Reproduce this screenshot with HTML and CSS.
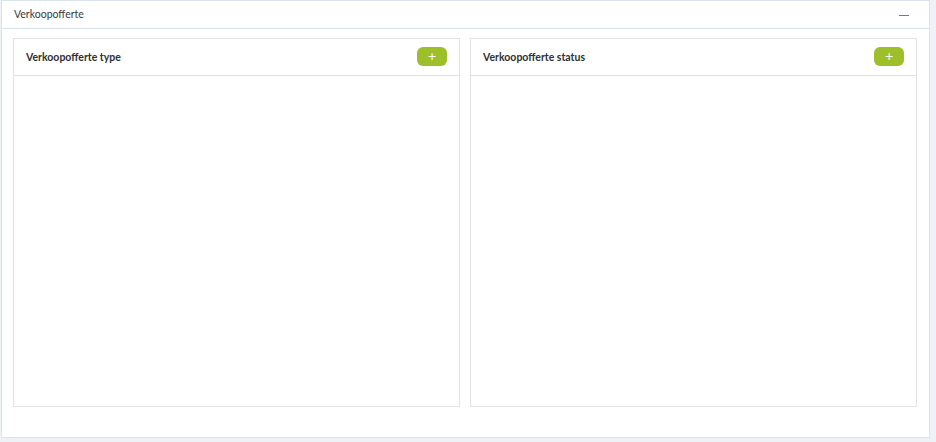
FILE: index.html
```html
<!DOCTYPE html>
<html lang="nl">
<head>
    <meta charset="UTF-8">
    <meta name="viewport" content="width=device-width, initial-scale=1.0">
    <title>Verkoopofferte</title>
    <link rel="stylesheet" href="styles.css">
</head>
<body>
    <div class="panel">
        <div class="panel-header">
            <span class="panel-title">Verkoopofferte</span>
            <button class="collapse-btn" title="Inklappen"><span class="minus"></span></button>
        </div>

        <div class="panel-body">
            <div class="card">
                <div class="card-header">
                    <h3>Verkoopofferte type</h3>
                    <button class="add-btn">+</button>
                </div>
                <div class="card-body"></div>
            </div>

            <div class="card">
                <div class="card-header">
                    <h3>Verkoopofferte status</h3>
                    <button class="add-btn">+</button>
                </div>
                <div class="card-body"></div>
            </div>
        </div>
    </div>
</body>
</html>
```

FILE: styles.css
```css
* {
    margin: 0;
    padding: 0;
    box-sizing: border-box;
}

body {
    font-family: Lato, "Open Sans", sans-serif;
    font-size: 11px;
    color: #333;
    background-color: #eef2f7;
    padding: 0 6px 4px 1px;
}

.panel {
    background-color: white;
    border: 1px solid #d9e4ee;
}

.panel-header {
    display: flex;
    align-items: center;
    justify-content: space-between;
    height: 28px;
    padding: 0 18px 2px 12px;
    border-bottom: 1px solid #d9e4ee;
}

.panel-title {
    font-size: 10.5px;
    color: #3a3a3a;
}

.collapse-btn {
    background: none;
    border: none;
    cursor: pointer;
    width: 12px;
    height: 12px;
    display: flex;
    align-items: center;
    margin-top: 4px;
}

.minus {
    display: block;
    width: 10px;
    height: 1px;
    background-color: #777;
}

.panel-body {
    display: grid;
    grid-template-columns: 1fr 1fr;
    gap: 10px;
    padding: 9px 12px 30px 11px;
}

.card {
    border: 1px solid #e2e2e2;
    display: flex;
    flex-direction: column;
    height: 369px;
}

.card-header {
    display: flex;
    align-items: center;
    justify-content: space-between;
    height: 37px;
    padding: 0 12px 1px 12px;
    border-bottom: 1px solid #e2e2e2;
}

.card-header h3 {
    font-size: 10.5px;
    font-weight: bold;
    color: #2f2f2f;
}

.add-btn {
    width: 30px;
    height: 19px;
    border: none;
    border-radius: 6px;
    background-color: #9dbf2a;
    color: white;
    font-family: "DejaVu Sans", sans-serif;
    font-size: 11px;
    line-height: 19px;
    cursor: pointer;
}

.card-body {
    flex: 1;
}
```
